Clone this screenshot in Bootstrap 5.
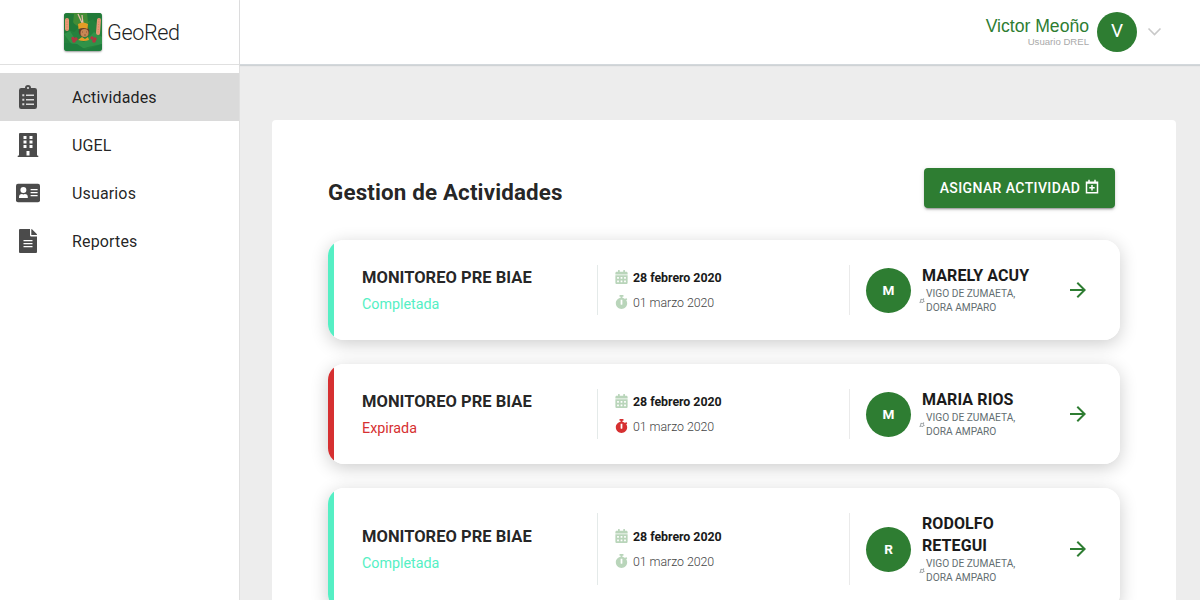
<!DOCTYPE html>
<html lang="es">
<head>
<meta charset="utf-8">
<meta name="viewport" content="width=device-width, initial-scale=1">
<title>GeoRed</title>
<link href="https://cdn.jsdelivr.net/npm/bootstrap@5.3.0/dist/css/bootstrap.min.css" rel="stylesheet">
<style>
body{font-family:Roboto,"Liberation Sans",sans-serif;background:#ededed;color:rgba(0,0,0,.87);height:100vh;overflow:hidden}
svg{display:block;flex:none}
.sidebar{width:240px;border-right:1px solid #e0e0e0}
.brand{height:65px;border-bottom:1px solid #e0e0e0;padding-left:64px;gap:5px}
.brand-name{font-size:21.6px;letter-spacing:-.38px;font-weight:300;line-height:1;color:#222;padding-top:2px}
.brand svg{border-radius:3px;box-shadow:0 1px 2px rgba(0,0,0,.4)}
.menu{padding-top:8px}
.menu a{height:48px;color:rgba(0,0,0,.87);font-size:16px;letter-spacing:.15px;padding-left:16px;border-radius:0}
.menu a svg{margin-right:32px;color:#4b4b4b}
.menu a span{padding-top:2px}
.menu a.active{background:#dadada}
.topbar{height:65px;border-bottom:1px solid #d3d8dc;box-shadow:0 1px 1px rgba(90,110,120,.2);padding-right:38px;position:relative}
.user{font-family:"Liberation Sans",sans-serif;text-align:right;margin-right:8px;padding-bottom:1px}
.user-name{font-size:17.6px;line-height:20px;color:#2e7d32}
.user-role{font-size:9.6px;line-height:11px;color:#aaa}
.disc{border-radius:50%;background:#2e7d32;color:#fff;flex:none}
.disc-top{width:40px;height:40px;font-size:19px;margin-right:10px;padding-bottom:2px}
.panel{margin:55px 24px 0 32px;background:#fff;border-radius:4px;padding:48px 56px 0;height:700px}
.panel-title{font-size:22.4px;letter-spacing:.14px;font-weight:700;line-height:28px;margin:10px 0 0}
.btn-assign,.btn-assign:hover{width:191px;height:40px;background:#2e7d32;color:#fff;border:0;border-radius:4px;font-size:14px;font-weight:500;letter-spacing:.4px;padding:0;box-shadow:0 3px 1px -2px rgba(0,0,0,.2),0 2px 2px rgba(0,0,0,.14),0 1px 5px rgba(0,0,0,.12);margin-right:5px;gap:5px}
.btn-assign svg{margin-top:-2px}
.task{border-radius:16px;box-shadow:0 4px 18px rgba(0,0,0,.2);padding:25px 0;margin-bottom:24px;overflow:hidden;background:linear-gradient(90deg,var(--tone) 6px,#fff 6px)}
.done{--tone:#55efc4;--clock:#b9d5ba}
.late{--tone:#d63031;--clock:#d63031}
.task-name{width:269px;padding:2px 0 0 34px}
.task-title{font-size:16.5px;font-weight:700;line-height:22px;letter-spacing:.03px}
.task-state{font-size:14.3px;line-height:22px;letter-spacing:0;color:var(--tone);margin-top:4px}
.task-dates{width:252px;border-left:1px solid #e4eae9;padding-left:17px;font-size:12.4px;line-height:25px}
.task-dates svg{margin:-2px 5px 0 0}
.task-dates .start{font-weight:700;color:#1a1a1a;font-size:12.4px;letter-spacing:-.04px}
.task-dates .end{color:#444;font-weight:300;letter-spacing:-.06px}
.task-owner{width:271px;border-left:1px solid #eaeaea;padding-left:16px;min-height:50px}
.disc-task{width:45px;height:45px;font-size:13.6px;font-weight:700;margin-right:8px}
.owner-text{width:147px}
.owner-name{width:124px;padding-left:3px;font-size:16px;font-weight:700;line-height:22px;color:#1b1b1b;letter-spacing:.1px}
.owner-boss{font-size:10.2px;line-height:14px;color:#636e72;gap:1px}
</style>
</head>
<body>
<svg width="0" height="0" class="position-absolute">
<defs>
<symbol id="calendar" viewBox="0 0 448 512"><path fill="currentColor" d="M0 464c0 26.500 21.500 48 48 48h352c26.500 0 48-21.500 48-48V192H0v272zM320 268c0-6.600 5.400-12 12-12h40c6.600 0 12 5.400 12 12v40c0 6.600-5.400 12-12 12h-40c-6.600 0-12-5.400-12-12v-40zm0 128c0-6.600 5.400-12 12-12h40c6.600 0 12 5.400 12 12v40c0 6.600-5.400 12-12 12h-40c-6.600 0-12-5.400-12-12v-40zM192 268c0-6.600 5.400-12 12-12h40c6.600 0 12 5.400 12 12v40c0 6.600-5.400 12-12 12h-40c-6.600 0-12-5.400-12-12v-40zm0 128c0-6.600 5.400-12 12-12h40c6.600 0 12 5.400 12 12v40c0 6.600-5.400 12-12 12h-40c-6.600 0-12-5.400-12-12v-40zM64 268c0-6.600 5.400-12 12-12h40c6.600 0 12 5.400 12 12v40c0 6.600-5.400 12-12 12H76c-6.600 0-12-5.400-12-12v-40zm0 128c0-6.600 5.400-12 12-12h40c6.600 0 12 5.400 12 12v40c0 6.600-5.400 12-12 12H76c-6.600 0-12-5.400-12-12v-40zM400 64h-48V16c0-8.800-7.200-16-16-16h-32c-8.800 0-16 7.200-16 16v48H160V16c0-8.800-7.200-16-16-16h-32c-8.800 0-16 7.200-16 16v48H48C21.500 64 0 85.500 0 112v48h448v-48c0-26.500-21.500-48-48-48z"/></symbol>
<symbol id="clock" viewBox="0 0 448 512"><path fill="currentColor" d="M432 304c0 114.900-93.100 208-208 208S16 418.900 16 304c0-104 76.300-190.200 176-205.500V64h-28c-6.600 0-12-5.400-12-12V12c0-6.600 5.400-12 12-12h120c6.600 0 12 5.400 12 12v40c0 6.600-5.400 12-12 12h-28v34.500c37.500 5.800 71.700 21.600 99.700 44.600l27.500-27.500c4.700-4.700 12.300-4.700 17 0l28.300 28.300c4.700 4.700 4.700 12.300 0 17l-29.400 29.400-.6.6C419.700 223.300 432 262.200 432 304zm-176 36V188.500c0-6.600-5.400-12-12-12h-40c-6.600 0-12 5.400-12 12V340c0 6.600 5.400 12 12 12h40c6.600 0 12-5.400 12-12z"/></symbol>
<symbol id="arrow" viewBox="0 0 24 24"><path fill="currentColor" d="M12 4l-1.410 1.410L16.170 11H4v2h12.170l-5.580 5.590L12 20l8-8z"/></symbol>
<symbol id="pin" viewBox="0 0 6 6"><path fill="none" stroke="#737b7e" stroke-width=".65" d="M1.900 1.200 3.200 1.600 4.700.7 4.400 2.300 5.300 3.400 4.100 3.700 3.400 5 2.500 4 .8 4.500 1.700 3z"/></symbol>
</defs>
</svg>
<div class="d-flex h-100">
  <aside class="sidebar bg-white flex-shrink-0">
    <div class="brand d-flex align-items-center">
      <svg width="38" height="38" viewBox="0 0 38 38">
        <rect width="38" height="38" fill="#25813d"/>
        <path fill="#438c35" d="M5 0h27L22 13 17 9 12 15z"/>
        <path fill="#217a38" d="M0 0 10 1 9 10 15 14 10 19 5 17 0 23zM23 0H38L35 14 29 6 24 9z"/>
        <path fill="#309248" d="M0 21 6 18 11 26 20 29 30 19 38 24V31L24 34 14 37 5 28z"/>
        <path fill="#1f7d3d" d="M0 30 13 31 22 37 38 31V38H0z"/>
        <path stroke="#e79a76" stroke-width="4" stroke-linecap="round" d="M3 7V16M35 7 34 20"/>
        <path stroke="#c9704f" stroke-width=".6" stroke-dasharray="1 1.500" d="M3 6V17M35 6 34 21"/>
        <path stroke="#e5bda9" stroke-width="1.300" fill="none" d="M14 1 19 12M18 2 19 11"/>
        <circle cx="20" cy="18.500" r="5.300" fill="#653c2b"/><circle cx="20.500" cy="20" r="4" fill="#c88754"/>
        <path fill="#e59c25" d="M14 11q5-3 10 0l-.5 5q-4-2-9 0zM14 27l4-3 3 2 3-2 1 3q-5 2-11 0z"/>
        <path stroke="#653525" stroke-width=".6" d="M18 19h1M22 19h1M20 22h2"/>
        <g fill="#b33540"><circle cx="9" cy="25.500" r="1.700"/><circle cx="12" cy="26" r="1.700"/><circle cx="10" cy="28" r="1.800"/><circle cx="28" cy="25" r="1.700"/><circle cx="31" cy="26" r="1.700"/><circle cx="30" cy="28" r="1.800"/></g>
      </svg>
      <span class="brand-name">GeoRed</span>
    </div>
    <nav class="menu nav flex-column">
      <a class="active d-flex align-items-center text-decoration-none" href="#">
        <svg width="24" height="24" viewBox="0 0 24 24"><path fill="currentColor" d="M5.250 3H9a3 3 0 0 1 6 0h3.750A2.250 2.250 0 0 1 21 5.250v16.500A2.250 2.250 0 0 1 18.750 24H5.250A2.250 2.250 0 0 1 3 21.750V5.250A2.250 2.250 0 0 1 5.250 3"/><circle cx="12" cy="3" r="1.100" fill="#dadada"/><path stroke="#dadada" stroke-width="1.400" d="M10 10.200h8M10 14.700h8M10 19.200h8"/><path stroke="#dadada" stroke-width="2" d="M6.300 10.200h2M6.300 14.700h2M6.300 19.200h2"/></svg><span>Actividades</span></a>
      <a class="d-flex align-items-center text-decoration-none" href="#">
        <svg width="24" height="24" viewBox="0 0 24 24"><path fill="currentColor" fill-rule="evenodd" d="M3 1q0-1 1-1h16q1 0 1 1v21.500h.8q.5 0 .5.500v1H1.700v-1q0-.5.5-.5H3zM7.500 3v3h3V3zm6 0v3h3V3zm-6 4.500v3h3v-3zm6 0v3h3v-3zm-6 4.500v3h3v-3zm6 0v3h3v-3zm-3 6v4.500h3V18z"/></svg><span>UGEL</span></a>
      <a class="d-flex align-items-center text-decoration-none" href="#">
        <svg width="24" height="24" viewBox="0 0 24 24"><rect y="2.700" width="24" height="18.600" rx="2" fill="currentColor"/><circle cx="7.400" cy="9" r="3" fill="#fff"/><path fill="#fff" d="M3 16q0-3 3-3l1.400.4L8.800 13q3 0 3 3v1H3z"/><path stroke="#fff" stroke-width="1.200" d="M14.600 8.600h7M14.600 11.600h7M14.600 14.600h7"/></svg><span>Usuarios</span></a>
      <a class="d-flex align-items-center text-decoration-none" href="#">
        <svg width="24" height="24" viewBox="0 0 24 24"><path fill="currentColor" d="M14 0v6.300q0 1.200 1.200 1.200H21V23q0 1-1 1H4q-1 0-1-1V1q0-1 1-1zM15.300 0q.5 0 1 .5l4.200 4.200q.5.500.5 1.300h-5.700z"/><path stroke="#fff" stroke-width="1.400" d="M7.500 11.600h9M7.500 14.600h9M7.500 17.600h9"/></svg><span>Reportes</span></a>
    </nav>
  </aside>
  <div class="flex-grow-1">
    <header class="topbar bg-white d-flex align-items-center justify-content-end">
      <div class="user"><div class="user-name">Victor Meoño</div><div class="user-role">Usuario DREL</div></div>
      <div class="disc disc-top d-flex align-items-center justify-content-center">V</div>
      <svg width="15" height="10" viewBox="0 0 15 10"><path fill="none" stroke="#c9c9c9" stroke-width="1.600" d="M1.500 1.500 7.500 7.500 13.500 1.500"/></svg>
    </header>
    <main class="panel">
      <div class="d-flex justify-content-between align-items-start mb-4 pb-2">
        <h1 class="panel-title">Gestion de Actividades</h1>
        <button class="btn btn-assign d-flex align-items-center justify-content-center" type="button">ASIGNAR ACTIVIDAD
          <svg width="14" height="16" viewBox="0 0 14 16"><path fill="none" stroke="#fff" stroke-width="1.500" d="M1.500 3.200h11v10.600h-11zM1 4h12M4 .8V4M10 .8V4M7 6v5.400M4.300 8.700h5.400"/></svg></button>
      </div>
      <section class="task done d-flex">
        <div class="task-name align-self-center"><div class="task-title">MONITOREO PRE BIAE</div><div class="task-state">Completada</div></div>
        <div class="task-dates d-flex flex-column justify-content-center">
          <div class="start d-flex align-items-center"><svg width="13" height="14" color="#b9d5ba"><use href="#calendar"/></svg>28 febrero 2020</div>
          <div class="end d-flex align-items-center"><svg width="13" height="14" style="color:var(--clock)"><use href="#clock"/></svg>01 marzo 2020</div>
        </div>
        <div class="task-owner d-flex align-items-center">
          <div class="disc disc-task d-flex align-items-center justify-content-center">M</div>
          <div class="owner-text"><div class="owner-name">MARELY ACUY</div><div class="owner-boss d-flex align-items-center"><svg width="6" height="6"><use href="#pin"/></svg><div>VIGO DE ZUMAETA,<br>DORA AMPARO</div></div></div>
          <svg width="24" height="24" color="#2e7d32"><use href="#arrow"/></svg>
        </div>
      </section>
      <section class="task late d-flex">
        <div class="task-name align-self-center"><div class="task-title">MONITOREO PRE BIAE</div><div class="task-state">Expirada</div></div>
        <div class="task-dates d-flex flex-column justify-content-center">
          <div class="start d-flex align-items-center"><svg width="13" height="14" color="#b9d5ba"><use href="#calendar"/></svg>28 febrero 2020</div>
          <div class="end d-flex align-items-center"><svg width="13" height="14" style="color:var(--clock)"><use href="#clock"/></svg>01 marzo 2020</div>
        </div>
        <div class="task-owner d-flex align-items-center">
          <div class="disc disc-task d-flex align-items-center justify-content-center">M</div>
          <div class="owner-text"><div class="owner-name">MARIA RIOS</div><div class="owner-boss d-flex align-items-center"><svg width="6" height="6"><use href="#pin"/></svg><div>VIGO DE ZUMAETA,<br>DORA AMPARO</div></div></div>
          <svg width="24" height="24" color="#2e7d32"><use href="#arrow"/></svg>
        </div>
      </section>
      <section class="task done d-flex">
        <div class="task-name align-self-center"><div class="task-title">MONITOREO PRE BIAE</div><div class="task-state">Completada</div></div>
        <div class="task-dates d-flex flex-column justify-content-center">
          <div class="start d-flex align-items-center"><svg width="13" height="14" color="#b9d5ba"><use href="#calendar"/></svg>28 febrero 2020</div>
          <div class="end d-flex align-items-center"><svg width="13" height="14" style="color:var(--clock)"><use href="#clock"/></svg>01 marzo 2020</div>
        </div>
        <div class="task-owner d-flex align-items-center">
          <div class="disc disc-task d-flex align-items-center justify-content-center">R</div>
          <div class="owner-text"><div class="owner-name">RODOLFO<br>RETEGUI</div><div class="owner-boss d-flex align-items-center"><svg width="6" height="6"><use href="#pin"/></svg><div>VIGO DE ZUMAETA,<br>DORA AMPARO</div></div></div>
          <svg width="24" height="24" color="#2e7d32"><use href="#arrow"/></svg>
        </div>
      </section>
    </main>
  </div>
</div>
<script src="https://cdn.jsdelivr.net/npm/bootstrap@5.3.0/dist/js/bootstrap.bundle.min.js"></script>
</body>
</html>
